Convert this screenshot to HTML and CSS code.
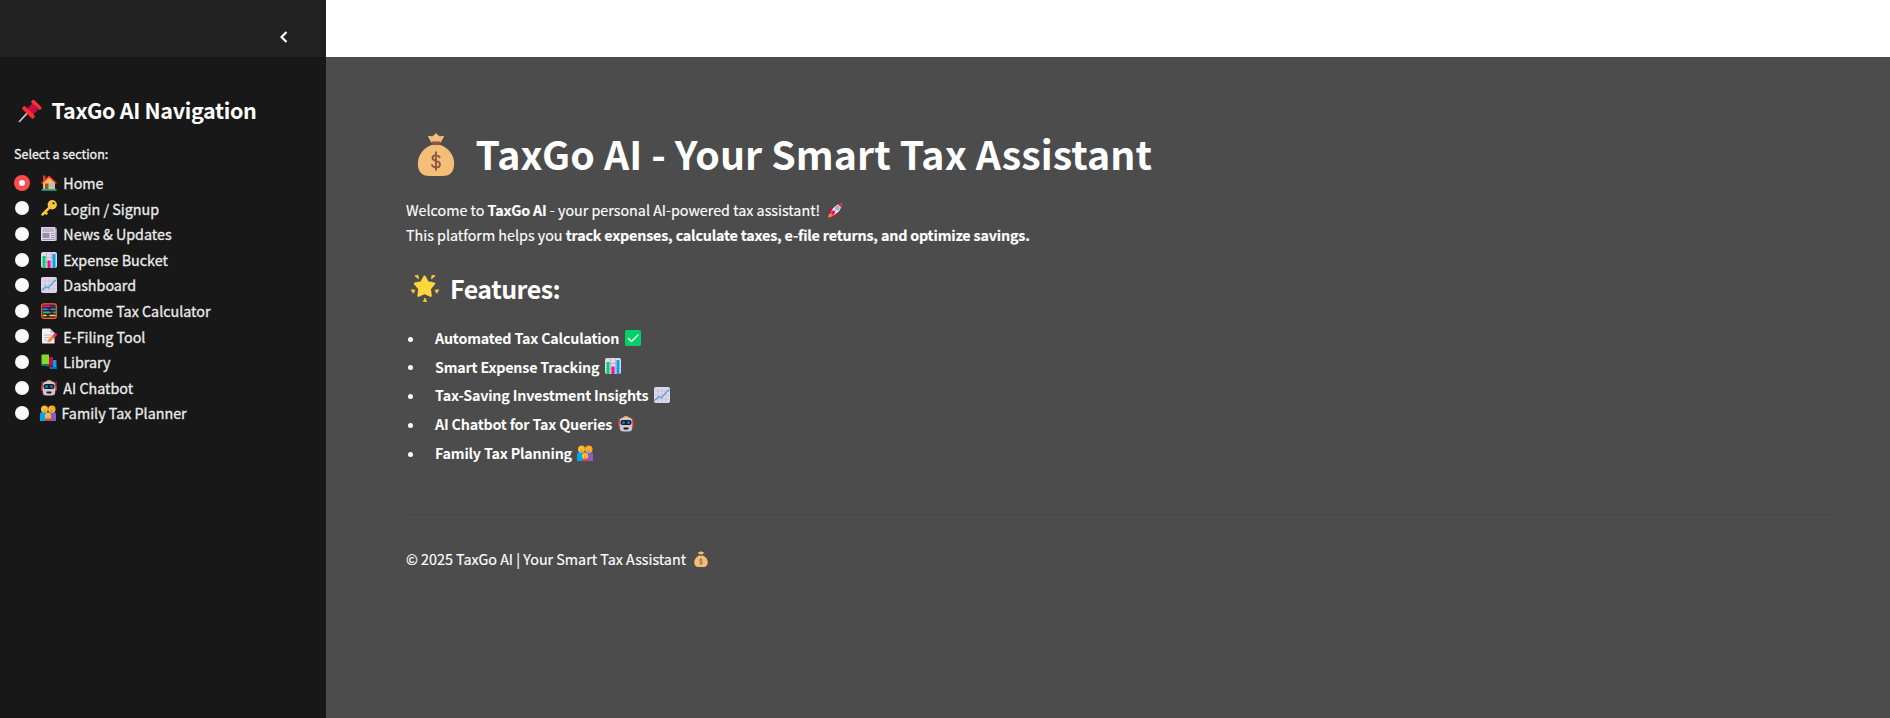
FILE: index.html
```html
<!DOCTYPE html>
<html lang="en">
<head>
<meta charset="utf-8">
<title>TaxGo AI</title>
<link rel="stylesheet" href="styles.css">
</head>
<body>
<svg class="sprite" aria-hidden="true">
  <symbol id="pin" viewBox="0 0 32 32"><path d="M12.500 18.500 2 30" stroke="#cdc4d6" stroke-width="2.200" stroke-linecap="round"/><path d="m19 6-9 9 8 8 9-9z" fill="#ca0b4a"/><path d="m18 2.500 2-1.500q1-.5 2 .5l9 9q1 1 .3 2L30 14q-1 1-2 0L18 5q-1-1 0-2.500z" fill="#fc312e"/><path d="m6 11 2-1.500q1-.5 2 .5l12 12q1 1 .3 2L20.500 26q-1 1-2 0L6 13.500q-1-1 0-2.500z" fill="#f92f2b"/></symbol>
  <symbol id="home" viewBox="0 0 32 32"><path d="M4 1h5v12H4z" fill="#d3422f"/><path d="M4 14 16 3l12 11v16H4z" fill="#ffb85c"/><path d="M8 17h7v12H8z" fill="#8c5543"/><path d="M18 16h8v8h-8z" fill="#83cbff"/><path d="m2 16 14-13 14 13" fill="none" stroke="#f8312f" stroke-width="3" stroke-linecap="round"/><path d="M1 28h30v3.500H1z" fill="#20b08a"/></symbol>
  <symbol id="key" viewBox="0 0 32 32"><path d="M3 29 20 12M8 24l3 3" stroke="#fcc53d" stroke-width="5" stroke-linecap="round"/><circle cx="22.500" cy="9.500" r="9.300" fill="#fcc53d"/><circle cx="25" cy="6.500" r="2.200" fill="#181818"/></symbol>
  <symbol id="news" viewBox="0 0 32 32"><path d="M25 5h7v22q0 3-3 3h-4z" fill="#998ea4"/><rect y="2" width="29" height="28" rx="2" fill="#e1d8ec"/><path d="M3 6h23M3 10h23M20 15h7M20 19h7M20 23h7M3 27h24" stroke="#998ea4" stroke-width="1.800"/><path d="M3 14h14v10H3z" fill="#998ea4"/></symbol>
  <symbol id="bars" viewBox="0 0 32 32"><rect width="32" height="32" rx="4" fill="#e1d8ec"/><path d="M11 1v30M21 1v30M1 11h30M1 21h30" stroke="#b4acbc" stroke-width="1.500"/><path d="M3 8h6v24H3z" fill="#00d26a"/><path d="M13 17h6v15h-6z" fill="#f70a8d"/><path d="M23 4h6v28h-6z" fill="#00a6ed"/></symbol>
  <symbol id="chart" viewBox="0 0 32 32"><rect width="32" height="32" rx="4" fill="#e1d8ec"/><path d="M8 1v30M16 1v30M24 1v30M1 8h30M1 16h30M1 24h30" stroke="#c6bdce" stroke-width="1.500"/><path d="m1 27 9-8 5 3 8-10 8-7" fill="none" stroke="#45a4e8" stroke-width="2.600"/></symbol>
  <symbol id="abacus" viewBox="0 0 32 32"><rect x="1.500" y="1.500" width="29" height="29" rx="4" fill="#321b41" stroke="#ff6723" stroke-width="2.500"/><path d="M4 6.500h14" stroke="#f70a8d" stroke-width="3.400"/><path d="M18 6.500h11M4 12.500h25M4 18.800h25M4 25h25" stroke="#86604f" stroke-width="1.200"/><path d="M4 12.500h9M20 12.500h9" stroke="#00a6ed" stroke-width="3.400"/><path d="M4 18.800h14M25 18.800h4" stroke="#00d26a" stroke-width="3.400"/><path d="M4 25h7M17 25h12" stroke="#fcd53f" stroke-width="3.400"/></symbol>
  <symbol id="memo" viewBox="0 0 32 32"><path d="M4 1h14l9 9v21H4q-2 0-2-2V3q0-2 2-2z" fill="#f3eef8"/><path d="M18 1v7q0 2 2 2h7z" fill="#cdc4d6"/><path d="M6 14h15M6 19h12M6 24h7" stroke="#b4acbc" stroke-width="1.800"/><path d="M15 27 27 15" stroke="#ff822d" stroke-width="6"/><path d="m26 16 3-3" stroke="#f92f60" stroke-width="6" stroke-linecap="round"/><path d="m11 30 2-6 4 4z" fill="#ffce7c"/></symbol>
  <symbol id="books" viewBox="0 0 32 32"><path d="M16 12h13q2 0 2 2v16H18z" fill="#00a6ed"/><path d="M19 26h12v4H19z" fill="#0074ba"/><path d="M10 6h12q2 0 2 2v17H12z" fill="#ca0b4a"/><path d="M12 22h12v4H12z" fill="#990838"/><path d="M1 3q0-2 2-2h13v21H1z" fill="#86d72f"/><path d="M1 20h15v4H3q-2 0-2-2z" fill="#008463"/></symbol>
  <symbol id="bot" viewBox="0 0 32 32"><path d="M2 3v18M30 3v18" stroke="#d3422f" stroke-width="2"/><path d="M1 12h5v10H3q-2 0-2-2zM31 12h-5v10h3q2 0 2-2z" fill="#f8312f"/><path d="M10 4q1-4 6-4t6 4z" fill="#ffb02e"/><rect x="3.500" y="3" width="25" height="28" rx="7" fill="#cdc4d6"/><rect x="5" y="8" width="22" height="10" rx="4" fill="#1c1c1c"/><circle cx="11" cy="13" r="3" fill="#0084ce"/><circle cx="21" cy="13" r="3" fill="#0084ce"/><rect x="11" y="23" width="10" height="4" rx="1.500" fill="#1c1c1c"/></symbol>
  <symbol id="family" viewBox="0 0 32 32"><path d="M0 32V19q0-5 5-5h11v18z" fill="#00a6ed"/><path d="M16 32V14h11q5 0 5 5v13z" fill="#8b5bc1"/><path d="M2 10Q1 1 9 1t7 8q0 5-6 7-7-1-8-6zM16 9q0-8 8-8t7 9q0 5-8 6-7-2-7-7z" fill="#f9a51f"/><circle cx="8.500" cy="9" r="5.500" fill="#ffc83d"/><circle cx="23" cy="9.500" r="5.500" fill="#ffb83d"/><path d="M6 8h1M11 8h1M20 8h1M25 8h1M7 12h4M21 12h4" stroke="#7d4533" stroke-width="1.500"/><circle cx="16" cy="22" r="6" fill="#ffc83d" stroke="#f39d20"/><path d="M10 32q1-5 6-5t6 5z" fill="#f8314f"/><path d="M14 21h1M17.500 21h1M14 24h4" stroke="#7d4533"/></symbol>
  <symbol id="bag" viewBox="0 0 32 32"><path d="M12.500 7 10 2.600q1-1.200 3 0Q14.500 2 16 0q1.500 2 3 2.600 2-1.200 3 0L19.500 7z" fill="#f3bf78"/><path d="M12.500 9h7c5 2 10 7 10 13.500q0 9.500-8.500 9.500H11Q2.500 32 2.500 22.500C2.500 16 7.500 11 12.500 9z" fill="#f3bf78"/><path d="M13 6.300h6v2.700h-6z" fill="#8c5543"/><path d="M18.700 18q-.8-1.500-2.700-1.500-2.600 0-2.600 2 0 1.800 2.600 2.300 2.900.6 2.900 2.600 0 2.200-2.900 2.200-2.300 0-3-1.800M16 14.300v13" fill="none" stroke="#8c5543" stroke-width="1.400" stroke-linecap="round"/></symbol>
  <symbol id="rocket" viewBox="0 0 32 32"><path d="m11 11-5 1-5 8 8 1zM21 21l-1 5-8 5-1-8z" fill="#ca0b4a"/><path d="m3 24 6-2 2 3-3 5-7 1z" fill="#ff822d"/><path d="M6 22Q14 2 31 1 30 18 11 27z" fill="#f4f0f8"/><path d="M22 3q4-2 9-2 0 5-2 9zM6 21l6-6 5 5-6 7z" fill="#e3244c"/><circle cx="21" cy="11" r="4" fill="#83cbff" stroke="#8880a0" stroke-width="1.500"/><path d="m9 24 8-9" stroke="#ca0b4a" stroke-width="2"/></symbol>
  <symbol id="star" viewBox="0 0 32 32"><path d="m15.500 3 3.500 6.500 7.500 1.500-5 6 1 8-7-3.300L8.500 25l1-8-5-6L12 9.500z" fill="#ffd53e" stroke="#ffd53e" stroke-width="2.500" stroke-linejoin="round"/><path d="M4.500 2 8 1.500l.5 4zM27.500 2 24 1.500l-.5 4zM.5 18l4 .5L2.500 22zM31.500 18l-4 .5 2 3.500zM16 27.500l-1.800 4h3.600z" fill="#fcc53d" stroke="#fcc53d" stroke-linejoin="round"/></symbol>
  <symbol id="check" viewBox="0 0 32 32"><rect width="32" height="32" rx="3.500" fill="#00d26a"/><path d="m7 17 6 6L26 10" fill="none" stroke="#f4f4f4" stroke-width="3" stroke-linecap="round" stroke-linejoin="round"/></symbol>
</svg>
<div class="app">
  <aside class="sidebar">
    <div class="sidebar-head">
      <svg class="chevron" viewBox="0 0 8 12"><path d="M6.500 1 1.500 6l5 5" fill="none" stroke="#fff" stroke-width="2.200"/></svg>
    </div>
    <div class="sidebar-body">
      <h2 class="nav-title"><svg class="icon-pin"><use href="#pin"/></svg><span>TaxGo AI Navigation</span></h2>
      <div class="nav-label">Select a section:</div>
      <nav class="nav">
        <label class="item"><i class="radio on"></i><svg class="emoji"><use href="#home"/></svg><span>Home</span></label>
        <label class="item"><i class="radio"></i><svg class="emoji"><use href="#key"/></svg><span>Login / Signup</span></label>
        <label class="item"><i class="radio"></i><svg class="emoji"><use href="#news"/></svg><span>News &amp; Updates</span></label>
        <label class="item"><i class="radio"></i><svg class="emoji"><use href="#bars"/></svg><span>Expense Bucket</span></label>
        <label class="item"><i class="radio"></i><svg class="emoji"><use href="#chart"/></svg><span>Dashboard</span></label>
        <label class="item"><i class="radio"></i><svg class="emoji"><use href="#abacus"/></svg><span>Income Tax Calculator</span></label>
        <label class="item"><i class="radio"></i><svg class="emoji"><use href="#memo"/></svg><span>E-Filing Tool</span></label>
        <label class="item"><i class="radio"></i><svg class="emoji"><use href="#books"/></svg><span>Library</span></label>
        <label class="item"><i class="radio"></i><svg class="emoji"><use href="#bot"/></svg><span>AI Chatbot</span></label>
        <label class="item family"><i class="radio"></i><svg class="emoji"><use href="#family"/></svg><span>Family Tax Planner</span></label>
      </nav>
    </div>
  </aside>
  <div class="page">
    <header class="topbar"></header>
    <main class="content">
      <h1 class="title"><svg class="icon-bag"><use href="#bag"/></svg><span>TaxGo AI - Your Smart Tax Assistant</span></h1>
      <p class="intro">Welcome to <b>TaxGo AI</b> - your personal AI-powered tax assistant!<svg class="emoji rocket"><use href="#rocket"/></svg><br>This platform helps you <b>track expenses, calculate taxes, e-file returns, and optimize savings.</b></p>
      <h2 class="subtitle"><svg class="icon-star"><use href="#star"/></svg><span>Features:</span></h2>
      <ul class="features">
        <li><span>Automated Tax Calculation</span><svg class="emoji"><use href="#check"/></svg></li>
        <li><span>Smart Expense Tracking</span><svg class="emoji"><use href="#bars"/></svg></li>
        <li><span>Tax-Saving Investment Insights</span><svg class="emoji"><use href="#chart"/></svg></li>
        <li><span>AI Chatbot for Tax Queries</span><svg class="emoji"><use href="#bot"/></svg></li>
        <li class="family"><span>Family Tax Planning</span><svg class="emoji"><use href="#family"/></svg></li>
      </ul>
      <hr class="rule">
      <p class="footer"><span>© 2025 TaxGo AI | Your Smart Tax Assistant</span><svg class="emoji"><use href="#bag"/></svg></p>
    </main>
  </div>
</div>
</body>
</html>
```
FILE: styles.css
```css
* { box-sizing: border-box; }
body { margin: 0; background: #4c4c4c; color: #fff; font: 14.3px/25.6px "Noto Sans CJK SC", "Noto Sans", sans-serif; white-space: nowrap; }
h1, h2, p, ul { margin: 0; padding: 0; }
b { font-weight: 700; letter-spacing: -0.18px; }
svg { display: block; flex: none; }
symbol, .emoji { overflow: visible; }
.sprite { position: absolute; width: 0; height: 0; }
.app { display: flex; height: 718px; overflow: hidden; }
.sidebar { width: 326px; flex: none; background: #181818; }
.sidebar-head { height: 57px; padding: 31px 38px 0 0; display: flex; justify-content: flex-end; background: #212121; }
.chevron { width: 8px; height: 12px; }
.sidebar-body { padding: 39px 14px 0; }
.nav-title { display: flex; height: 28.8px; font-size: 21.5px; line-height: 28.8px; font-weight: 700; letter-spacing: -0.32px; }
.icon-pin { width: 24px; height: 24px; margin: 3px 9.5px 0 4px; }
.nav-label { margin-top: 18.7px; height: 22px; font-size: 12.5px; line-height: 22px; color: #f0f0f0; -webkit-text-stroke: 0.3px #f0f0f0; }
.nav { margin-top: 4.6px; color: #ececec; -webkit-text-stroke: 0.3px #ececec; }
.item { display: flex; align-items: center; height: 25.6px; }
.radio { width: 14px; height: 14px; margin: 0 12px 0 1px; border-radius: 50%; background: #fafafe; }
.radio.on { width: 16px; height: 16px; margin: 0 11px 0 0; border: 5px solid #ff4b4b; }
.emoji { width: 16px; height: 16px; }
.item .emoji { margin-right: 6.3px; }
.item.family .emoji { margin: 0 5.5px 0 -1px; }
.page { flex: 1; }
.topbar { height: 57px; background: #fff; }
.content { padding: 69.5px 60px 0 80px; }
.title { display: flex; height: 52.8px; font-size: 39.3px; line-height: 52.8px; font-weight: 700; letter-spacing: 0.05px; }
.icon-bag { width: 44px; height: 43px; margin: 6.5px 17.5px 0 8px; }
.intro { margin-top: 18.2px; line-height: 25px; -webkit-text-stroke: 0.15px #fff; }
.rocket { display: inline-block; height: 15px; vertical-align: -2px; margin-left: 6.5px; }
.subtitle { display: flex; margin-top: 24.7px; height: 33.6px; font-size: 25px; line-height: 33.6px; font-weight: 600; letter-spacing: -0.5px; }
.icon-star { width: 28px; height: 28px; margin: 2px 11px 0 5px; }
.features { margin-top: 19px; list-style: none; font-weight: 600; letter-spacing: -0.2px; }
.features li { display: flex; align-items: center; height: 25.6px; margin-bottom: 3.2px; }
.features li::before { content: ""; width: 5px; height: 5px; margin: 3px 22px 0 2px; border-radius: 50%; background: #fff; }
.features .emoji { margin-left: 6px; }
.features .family .emoji { margin-left: 5px; }
.rule { height: 1px; margin: 49px 0 0; border: 0; background: #464646; }
.footer { display: flex; align-items: center; margin-top: 30.5px; -webkit-text-stroke: 0.15px #fff; }
.footer .emoji { margin-left: 7px; }
```
